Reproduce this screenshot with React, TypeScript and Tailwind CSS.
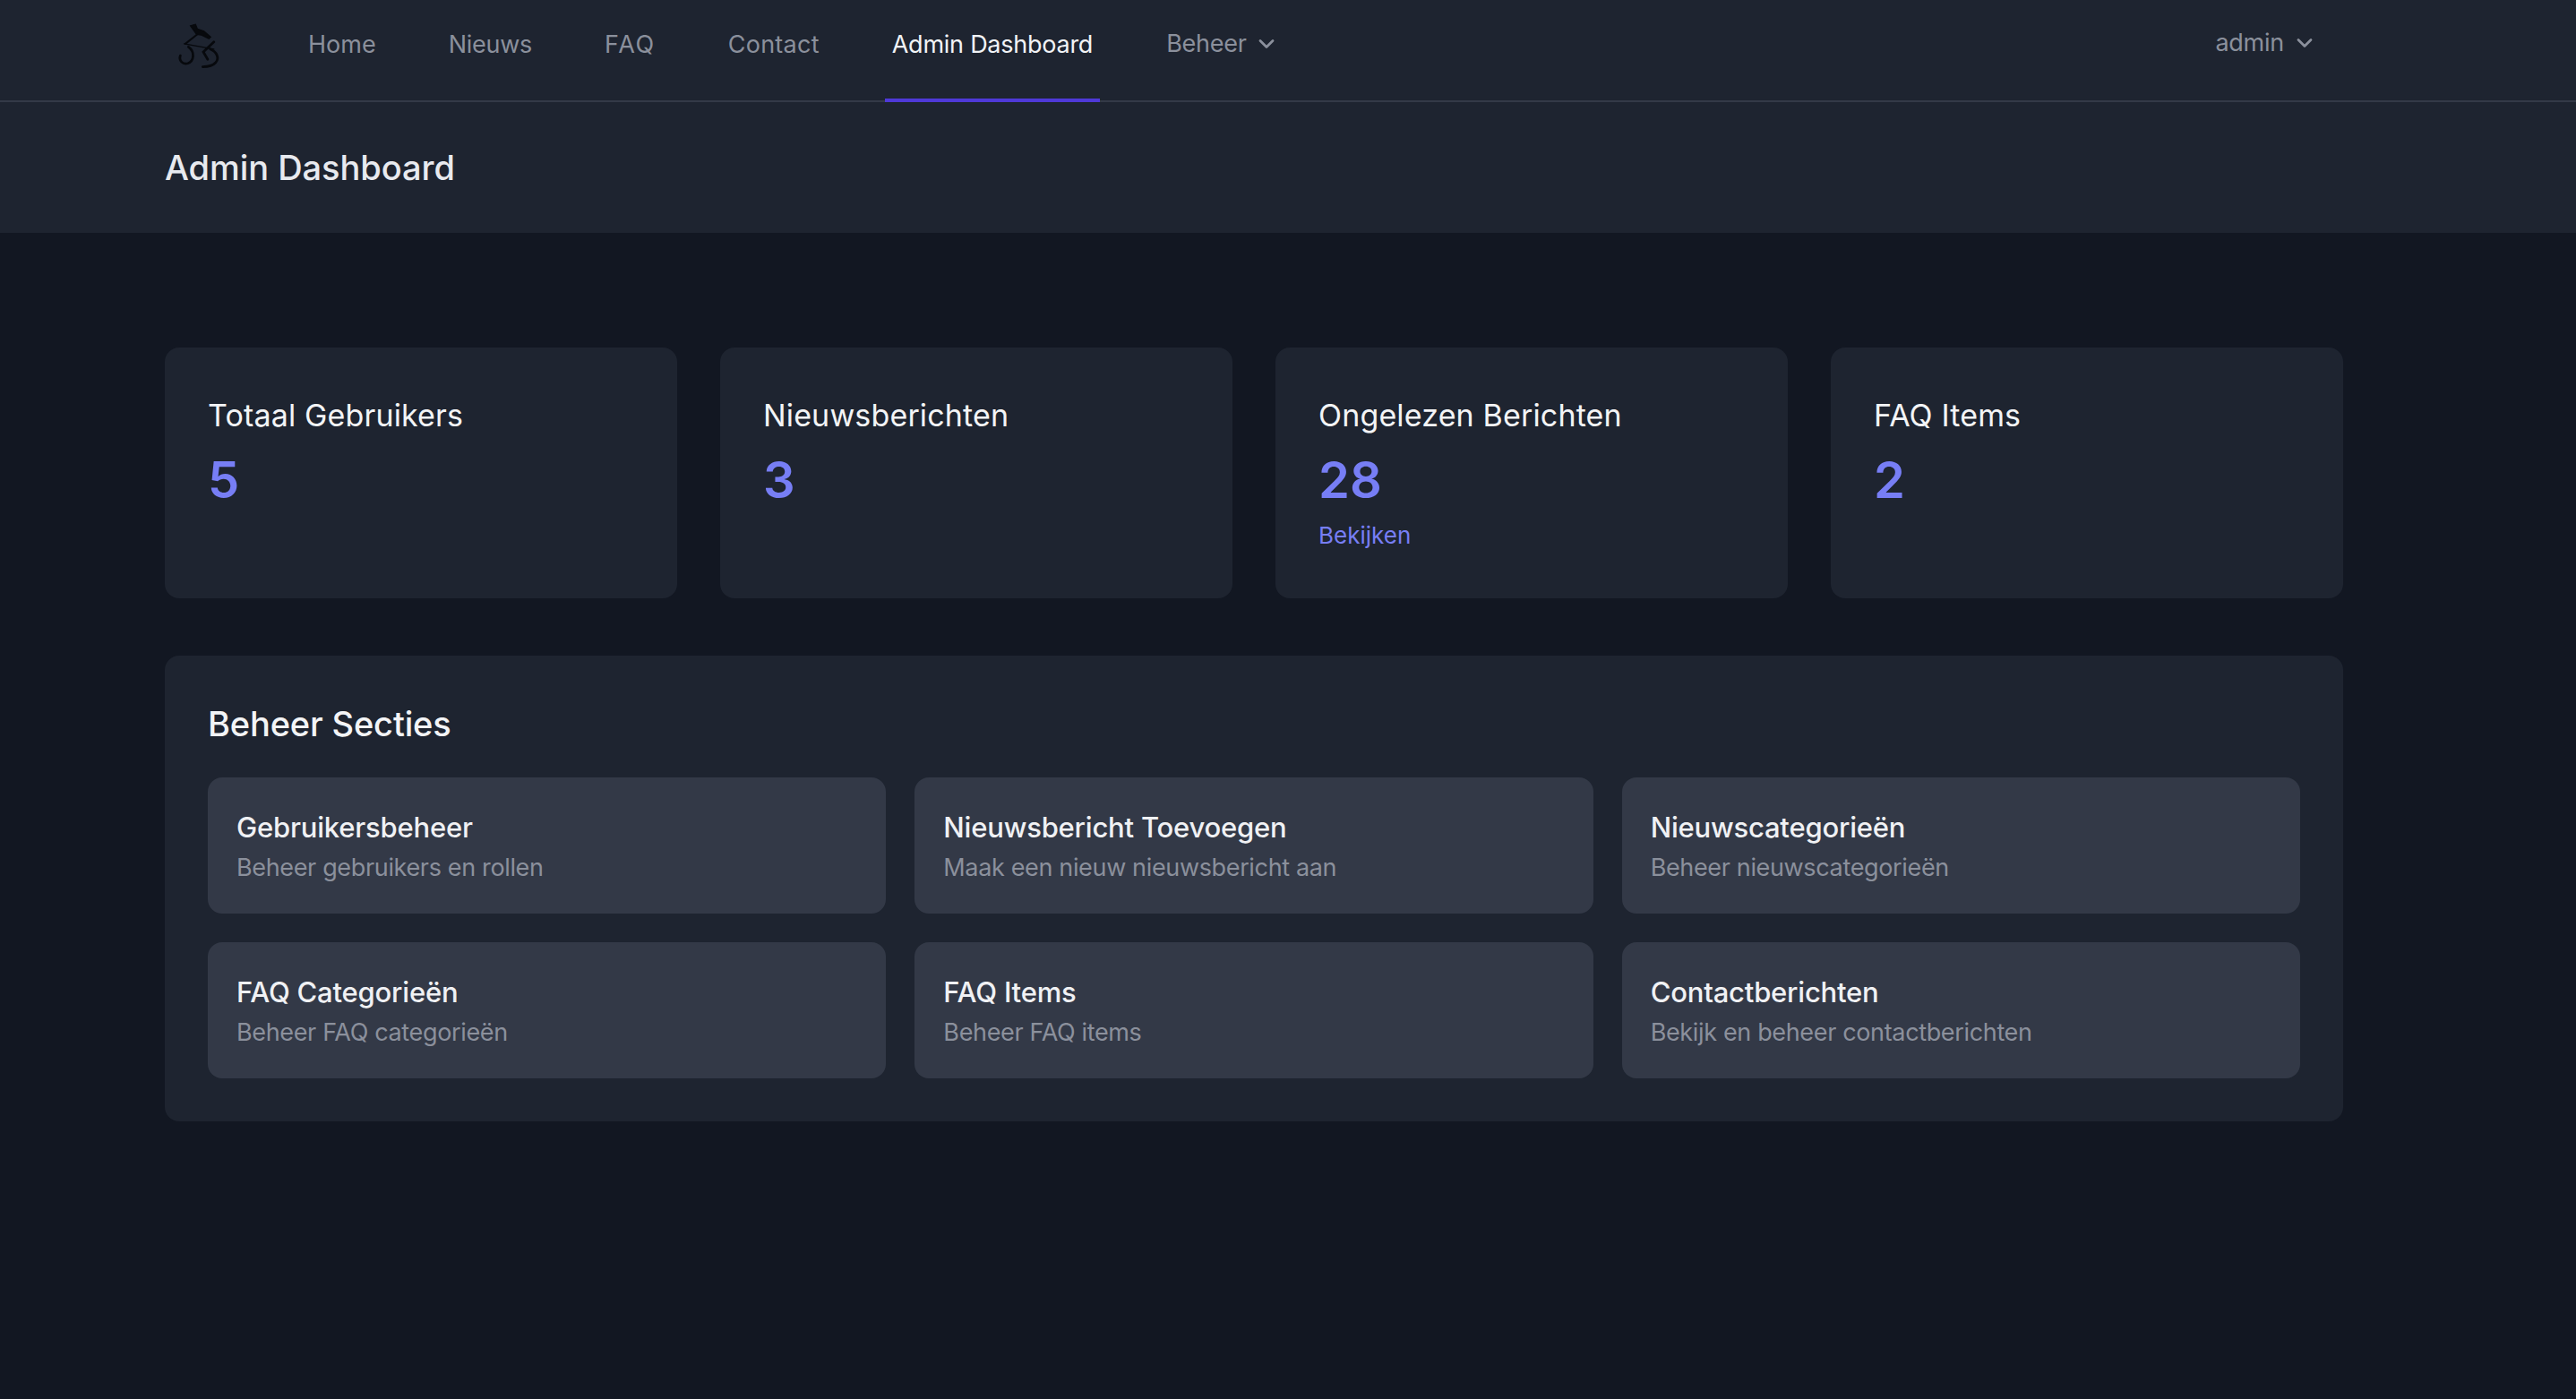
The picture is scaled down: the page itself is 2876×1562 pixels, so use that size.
import { ChevronDown } from 'lucide-react';

const stats = [
  { label: 'Totaal Gebruikers', value: '5' },
  { label: 'Nieuwsberichten', value: '3' },
  { label: 'Ongelezen Berichten', value: '28', link: 'Bekijken' },
  { label: 'FAQ Items', value: '2' },
];

const sections = [
  { title: 'Gebruikersbeheer', text: 'Beheer gebruikers en rollen' },
  { title: 'Nieuwsbericht Toevoegen', text: 'Maak een nieuw nieuwsbericht aan' },
  { title: 'Nieuwscategorieën', text: 'Beheer nieuwscategorieën' },
  { title: 'FAQ Categorieën', text: 'Beheer FAQ categorieën' },
  { title: 'FAQ Items', text: 'Beheer FAQ items' },
  { title: 'Contactberichten', text: 'Bekijk en beheer contactberichten' },
];

const links = [
  { label: 'Home', tracking: 'tracking-[0px]' },
  { label: 'Nieuws', tracking: 'tracking-[-0.25px]' },
  { label: 'FAQ', tracking: 'tracking-[1.6px]' },
  { label: 'Contact', tracking: 'tracking-[0.25px]' },
];

function Logo() {
  return (
    <svg viewBox="90 45 135 150" className="w-[48px] h-[52px]" fill="none" stroke="#07090d" strokeLinecap="round">
      {/* rider */}
      <path d="M130 56 L147 51 L153 66 L174 73 L196 92 L190 98 L166 86 L150 84 Z" fill="#07090d" strokeWidth="3" />
      <path d="M152 84 L114 114" strokeWidth="6" />
      {/* frame */}
      <path d="M110 114 L206 131" strokeWidth="4" />
      <path d="M206 108 L172 140 L186 164" strokeWidth="8" />
      {/* wheels */}
      <path d="M124 124 C146 140 142 170 122 177 C106 182 92 168 98 152" strokeWidth="8" />
      <path d="M194 131 C216 140 224 160 212 174 C202 185 186 188 170 188" strokeWidth="8" />
    </svg>
  );
}

export default function App() {
  return (
    <div className="min-h-[1562px] bg-[#121722] font-['Inter','Liberation_Sans',sans-serif]">
      {/* Nav */}
      <nav className="h-[114px] bg-[#1e2430] border-b-2 border-[#333947]">
        <div className="h-full ml-[184px] w-[2432px] pl-[14px] pr-[29px] flex items-stretch justify-between">
          <div className="flex items-stretch">
            <div className="w-[138px] pt-[25px]">
              <Logo />
            </div>
            <div className="flex items-stretch gap-[65px] -mb-[2px]">
              {links.map((l) => (
                <a key={l.label} className={`px-[8px] pb-[14px] flex items-center text-[27px] text-[#8b909c] ${l.tracking}`}>
                  {l.label}
                </a>
              ))}
              <a className="px-[8px] pb-[10px] flex items-center text-[27px] text-[#f1f3f6] tracking-[-0.25px] border-b-4 border-[#4f39d8]">
                Admin Dashboard
              </a>
              <button className="flex items-center gap-[8px] pl-[9px] text-[27px] text-[#8b909c] tracking-[-0.25px] pb-[16px]">
                Beheer
                <ChevronDown className="w-[28px] h-[28px]" strokeWidth={2.4} />
              </button>
            </div>
          </div>
          <button className="flex items-center gap-[9px] text-[27px] text-[#8b909c] tracking-[-0.25px] pb-[16px]">
            admin
            <ChevronDown className="w-[28px] h-[28px]" strokeWidth={2.4} />
          </button>
        </div>
      </nav>

      {/* Header */}
      <header className="h-[146px] bg-[#1e2430] flex items-center">
        <h1 className="ml-[184px] text-[38px] font-medium text-[#e8eaef] tracking-[-0.05px]">Admin Dashboard</h1>
      </header>

      {/* Main */}
      <main className="ml-[184px] w-[2432px] pt-[128px]">
        <div className="grid grid-cols-4 gap-[48px] mb-[64px]">
          {stats.map((s) => (
            <div key={s.label} className="h-[280px] bg-[#1e2430] rounded-[16px] pt-[52px] px-[48px]">
              <h3 className="text-[34px] leading-[48px] text-[#f3f4f6] tracking-[0.15px]">{s.label}</h3>
              <p className="text-[56px] leading-[72px] mt-[12px] font-semibold text-[#777ef5]">{s.value}</p>
              {s.link && <a className="block text-[26px] leading-[40px] mt-[6px] text-[#777ef5] tracking-[0px]">{s.link}</a>}
            </div>
          ))}
        </div>

        <section className="bg-[#1e2430] rounded-[16px] p-[48px]">
          <h2 className="text-[38px] leading-[56px] font-medium text-[#f3f4f6] tracking-[-0.15px] mb-[32px]">Beheer Secties</h2>
          <div className="grid grid-cols-3 gap-[32px]">
            {sections.map((s) => (
              <a key={s.title} className="h-[152px] bg-[#333947] rounded-[16px] p-[32px]">
                <h4 className="text-[31px] leading-[48px] font-medium text-[#f0f1f4] tracking-[-0.2px]">{s.title}</h4>
                <p className="text-[27px] leading-[40px] mt-[1px] text-[#8b909c] tracking-[-0.35px]">{s.text}</p>
              </a>
            ))}
          </div>
        </section>
      </main>
    </div>
  );
}
